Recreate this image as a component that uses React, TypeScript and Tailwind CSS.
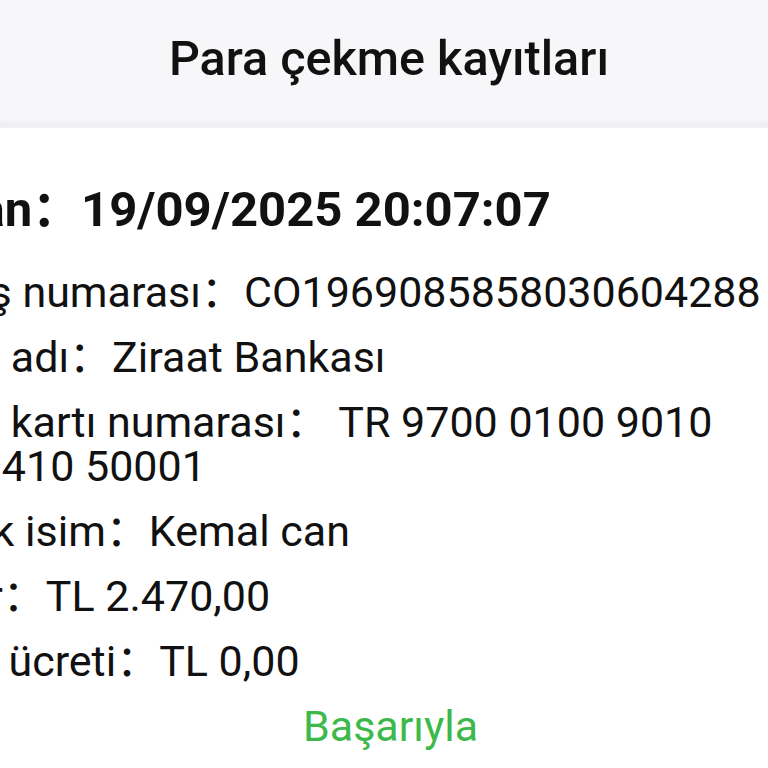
import React from 'react';

interface Row {
  label: string;
  value: string;
}

const rows: Row[] = [
  { label: 'Sipariş numarası', value: 'CO1969085858030604288' },
  { label: 'Banka adı', value: 'Ziraat Bankası' },
  { label: 'Banka kartı numarası', value: ' TR 9700 0100 9010 73250410 50001' },
  { label: 'Gerçek isim', value: 'Kemal can' },
  { label: 'Miktar', value: 'TL 2.470,00' },
  { label: 'Servis ücreti', value: 'TL 0,00' },
];

export default function App() {
  return (
    <div className="w-[768px] h-[768px] overflow-hidden bg-white text-[#111] font-['Roboto','Noto_Sans_CJK_SC',sans-serif]">
      {/* top bar */}
      <header className="h-[128px] flex items-center justify-center pl-[10px] pb-[9px] bg-[#f7f7f9] border-b-2 border-[#f2f2f4] shadow-[inset_0_-8px_8px_-6px_rgba(0,0,0,0.06)]">
        <h1 className="text-[48.5px] leading-[56px] font-medium">Para çekme kayıtları</h1>
      </header>

      {/* record detail, scrolled a bit to the right */}
      <div className="-ml-[119px] pt-[54px] flex flex-col">
        <div className="-ml-[1px] text-[49px] leading-[56px] font-bold whitespace-nowrap">
          Zaman：19/09/2025 20:07:07
        </div>
        <div className="mt-[32px] flex flex-col gap-[21px] text-[43px] leading-[44px]">
          {rows.map((row) => (
            <p key={row.label}>
              {row.label}：{row.value}
            </p>
          ))}
          <p className="pl-[422px] text-[#3cb94a]">Başarıyla</p>
        </div>
      </div>
    </div>
  );
}
